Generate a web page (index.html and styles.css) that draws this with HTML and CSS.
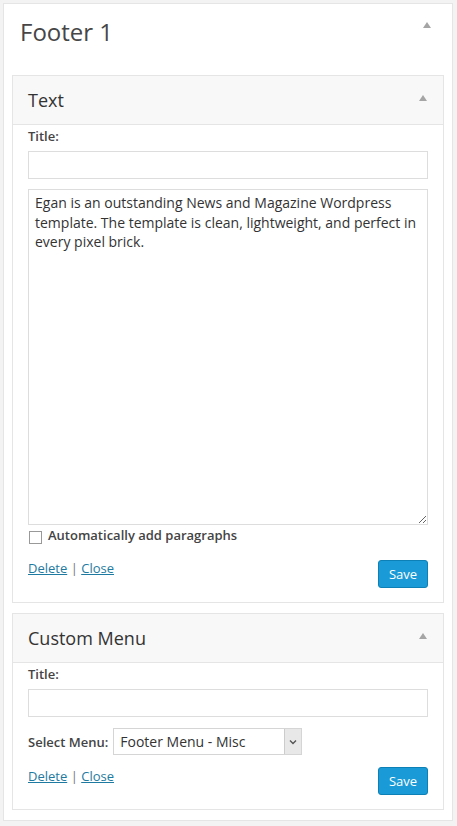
FILE: index.html
```html
<!DOCTYPE html>
<html lang="en">
<head>
    <meta charset="UTF-8">
    <meta name="viewport" content="width=device-width, initial-scale=1.0">
    <title>Widgets - Footer 1</title>
    <link rel="stylesheet" href="styles.css">
</head>
<body>
    <div class="sidebar">
        <div class="sidebar-header">
            <h2>Footer 1</h2>
            <span class="toggle toggle-big"></span>
        </div>

        <div class="widget">
            <div class="widget-top">
                <h3>Text</h3>
                <span class="toggle"></span>
            </div>
            <div class="widget-inside">
                <label class="field-label" for="text-title">Title:</label>
                <input type="text" id="text-title" class="field">
                <textarea class="field field-area">Egan is an outstanding News and Magazine Wordpress template. The template is clean, lightweight, and perfect in every pixel brick.</textarea>
                <label class="check-row">
                    <input type="checkbox" class="check">
                    <span>Automatically add paragraphs</span>
                </label>
                <div class="widget-actions">
                    <div class="links">
                        <a href="#delete">Delete</a> <span class="sep">|</span> <a href="#close">Close</a>
                    </div>
                    <button type="button" class="btn-save">Save</button>
                </div>
            </div>
        </div>

        <div class="widget">
            <div class="widget-top">
                <h3>Custom Menu</h3>
                <span class="toggle"></span>
            </div>
            <div class="widget-inside">
                <label class="field-label" for="menu-title">Title:</label>
                <input type="text" id="menu-title" class="field">
                <div class="select-row">
                    <span class="field-label">Select Menu:</span>
                    <div class="select">
                        <span class="select-value">Footer Menu - Misc</span>
                        <span class="select-arrow">
                            <svg width="8" height="6" viewBox="0 0 8 6"><path d="M1 1.5 L4 4.5 L7 1.5" fill="none" stroke="#555" stroke-width="1.4"/></svg>
                        </span>
                    </div>
                </div>
                <div class="widget-actions actions-menu">
                    <div class="links">
                        <a href="#delete">Delete</a> <span class="sep">|</span> <a href="#close">Close</a>
                    </div>
                    <button type="button" class="btn-save">Save</button>
                </div>
            </div>
        </div>
    </div>
</body>
</html>
```

FILE: styles.css
```css
* {
    box-sizing: border-box;
}
body {
    font-family: 'Open Sans', 'Noto Sans', sans-serif;
    color: #444;
    background-color: #f3f3f3;
    margin: 0;
    padding: 3px 4px 5px 3px;
}
.sidebar {
    width: 450px;
    background-color: #fff;
    border: 1px solid #e5e5e5;
    padding-bottom: 10px;
}
.sidebar-header {
    display: flex;
    justify-content: space-between;
    align-items: flex-start;
    padding: 13px 21px 28px 16px;
}
.sidebar-header h2 {
    margin: 0;
    font-size: 24px;
    line-height: 30px;
    font-weight: 400;
    color: #464646;
}
.toggle {
    width: 0;
    height: 0;
    border-left: 4px solid transparent;
    border-right: 4px solid transparent;
    border-bottom: 6px solid #a5a5a5;
}
.toggle-big {
    margin-top: 5px;
}
.widget {
    margin: 0 8px;
    border: 1px solid #e5e5e5;
    background-color: #fff;
}
.widget + .widget {
    margin-top: 10px;
}
.widget-top {
    display: flex;
    justify-content: space-between;
    align-items: center;
    height: 49px;
    padding: 0 16px 0 15px;
    background-color: #f8f8f8;
    border-bottom: 1px solid #e5e5e5;
}
.widget-top h3 {
    margin: 0;
    font-size: 18px;
    line-height: 48px;
    font-weight: 400;
    color: #333;
}
.widget-top .toggle {
    margin-bottom: 4px;
}
.widget-inside {
    padding: 2px 15px 14px 15px;
}
.field-label {
    display: block;
    font-size: 13px;
    line-height: 18px;
    font-weight: 600;
    color: #444;
}
.field {
    display: block;
    width: 100%;
    height: 28px;
    margin: 6px 0 0;
    border: 1px solid #ddd;
    background-color: #fff;
    font-family: inherit;
    font-size: 14px;
    color: #333;
    padding: 3px 6px;
}
.field-area {
    height: 336px;
    margin-top: 10px;
    padding: 3px 6px;
    line-height: 19.5px;
    font-size: 14px;
    color: #333;
    resize: vertical;
}
.check-row {
    display: flex;
    align-items: center;
    gap: 6px;
    margin-top: 1px;
    font-size: 13px;
    line-height: 18px;
    font-weight: 600;
    color: #444;
}
.check {
    appearance: none;
    width: 13px;
    height: 13px;
    margin: 4px 0 0 1px;
    border: 1px solid #999;
    background-color: #fff;
}
.widget-actions {
    display: flex;
    justify-content: space-between;
    align-items: flex-start;
    margin-top: 16px;
}
.actions-menu {
    margin-top: 12px;
}
.links {
    font-size: 13px;
    line-height: 18px;
    margin-top: -1px;
    color: #777;
}
.links a {
    color: #1e7aa0;
    text-decoration: underline;
}
.actions-menu .links {
    margin-top: 0;
}
.btn-save {
    width: 50px;
    height: 28px;
    padding: 0;
    font-family: inherit;
    font-size: 13px;
    color: #fff;
    background-color: #1a9ad6;
    border: 1px solid #0d80b5;
    border-radius: 3px;
    cursor: pointer;
}
.select-row {
    display: flex;
    align-items: center;
    gap: 5px;
    margin-top: 11px;
}
.select {
    display: flex;
    align-items: stretch;
    width: 189px;
    height: 27px;
    border: 1px solid #d5d5d5;
    background-color: #fff;
}
.select-value {
    flex: 1;
    padding-left: 6px;
    font-size: 14px;
    line-height: 25px;
    color: #333;
}
.select-arrow {
    display: flex;
    align-items: center;
    justify-content: center;
    width: 17px;
    background-color: #e8e8e8;
    border-left: 1px solid #ccc;
}
```
